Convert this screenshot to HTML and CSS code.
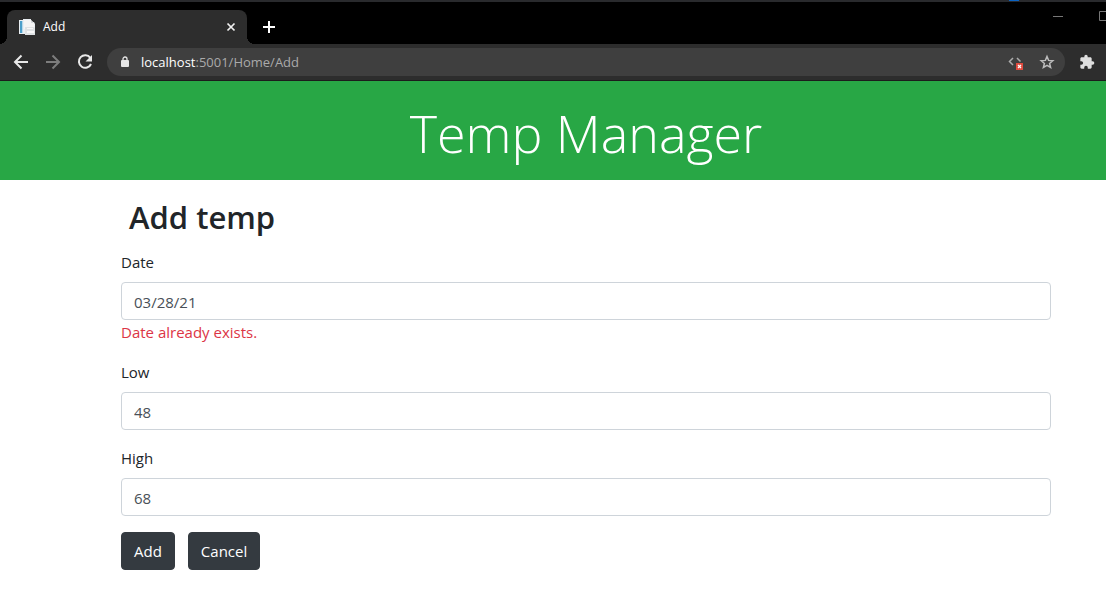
FILE: index.html
```
<!DOCTYPE html>
<html lang="en">
<head>
<meta charset="utf-8">
<meta name="viewport" content="width=device-width, initial-scale=1">
<title>Add</title>
<link rel="stylesheet" href="styles.css">
</head>
<body>
<div class="browser">
  <div class="tabstrip">
    <div class="tab">
      <svg class="favicon" width="16" height="16" viewBox="0 0 16 16" aria-hidden="true">
        <path fill="#e9eef2" d="M0 1h4V0h8v3h3l1 2v11H6v-1H0z"/>
        <path fill="#4c9fca" d="M1 2h3v12H1z"/>
        <path fill="#b9d9ea" d="M3 2h1v12H3z"/>
        <path fill="#f5f5f5" d="M5 1h7l3 3v6H5z"/>
        <path fill="#d5d9dc" d="M12 1v3h3z"/>
        <path fill="#dfe2e4" d="M6 8h9l1 1v7H6z"/>
        <path fill="#f8f8f8" d="M8 9h6v1H8zM8 12h7v2H8z"/>
      </svg>
      <span class="tab-title">Add</span>
      <button class="icon-button" type="button" aria-label="Close tab">
        <svg width="10" height="10" viewBox="0 0 10 10"><path d="M1.500 1.500l7 7M8.500 1.500l-7 7" stroke="#f1f1f1" stroke-width="1.700"/></svg>
      </button>
    </div>
    <button class="icon-button new-tab" type="button" aria-label="New tab">
      <svg width="12" height="12" viewBox="0 0 12 12"><path d="M6 0v12M0 6h12" stroke="#fff" stroke-width="2"/></svg>
    </button>
    <div class="window-controls">
      <button class="icon-button" type="button" aria-label="Minimize">
        <svg width="10" height="10" viewBox="0 0 10 10"><path d="M0 5.500h10" stroke="#777"/></svg>
      </button>
      <button class="icon-button" type="button" aria-label="Maximize">
        <svg width="10" height="10" viewBox="0 0 10 10"><path d="M.5.5h9v9h-9z" fill="none" stroke="#777"/></svg>
      </button>
    </div>
  </div>
  <div class="toolbar">
    <button class="icon-button" type="button" aria-label="Back">
      <svg width="16" height="16" viewBox="0 0 16 16" fill="none" stroke="#e8e8e8" stroke-width="2"><path d="M15 8H2M8.500 1.500L2 8l6.500 6.500"/></svg>
    </button>
    <button class="icon-button" type="button" aria-label="Forward">
      <svg width="16" height="16" viewBox="0 0 16 16" fill="none" stroke="#7d7d7d" stroke-width="2"><path d="M1 8h13M7.500 1.500L14 8l-6.500 6.500"/></svg>
    </button>
    <button class="icon-button" type="button" aria-label="Reload">
      <svg width="16" height="16" viewBox="0 0 16 16"><path d="M13.300 3.800A6.300 6.300 0 1 0 14 10" fill="none" stroke="#e8e8e8" stroke-width="2"/><path d="M15 1v6.500H8.500z" fill="#e8e8e8"/></svg>
    </button>
    <div class="address">
      <svg class="lock" width="8" height="12" viewBox="0 0 8 12" aria-hidden="true"><path d="M2 5V3a2 2 0 0 1 4 0v2" fill="none" stroke="#e6e6e6" stroke-width="1.300"/><rect y="4" width="8" height="7" rx="1" fill="#e6e6e6"/></svg>
      <span class="url"><span class="host">localhost</span>:5001/Home/Add</span>
      <button class="icon-button" type="button" aria-label="View blocked script">
        <svg width="16" height="16" viewBox="0 0 16 16"><path d="M6 4L2.500 7.500 6 11M10 4l3.500 3.500" fill="none" stroke="#adadad" stroke-width="1.500"/><rect x="9" y="9" width="7" height="7" fill="#df4b3f"/><path d="M11 11l3 3M14 11l-3 3" stroke="#fff" stroke-width="1.200"/></svg>
      </button>
      <button class="icon-button" type="button" aria-label="Bookmark this page">
        <svg width="16" height="16" viewBox="0 0 16 16"><path d="M8 2.500l1.600 3.900 4.200.3-3.200 2.700 1 4.100L8 11.300l-3.600 2.200 1-4.100-3.200-2.700 4.200-.3z" fill="none" stroke="#bcbcbc" stroke-width="1.500"/></svg>
      </button>
    </div>
    <button class="icon-button" type="button" aria-label="Extensions">
      <svg width="16" height="16" viewBox="0 0 24 24" fill="#dedede"><path d="M20.500 11H19V7c0-1.100-.9-2-2-2h-4V3.500a2.500 2.500 0 0 0-5 0V5H4c-1.100 0-2 .9-2 2v3.800h1.500a2.700 2.700 0 0 1 0 5.400H2V20c0 1.100.9 2 2 2h3.800v-1.500a2.700 2.700 0 0 1 5.400 0V22H17c1.100 0 2-.9 2-2v-4h1.500a2.500 2.500 0 0 0 0-5z"/></svg>
    </button>
  </div>
</div>
<header class="banner"><h1 class="banner-title">Temp Manager</h1></header>
<main class="content">
  <h2 class="heading">Add temp</h2>
  <form>
    <div class="field">
      <label class="label" for="date">Date</label>
      <input class="input" id="date" type="text" value="03/28/21" aria-describedby="date-error">
      <span class="error" id="date-error">Date already exists.</span>
    </div>
    <div class="field">
      <label class="label" for="low">Low</label>
      <input class="input" id="low" type="text" value="48">
    </div>
    <div class="field">
      <label class="label" for="high">High</label>
      <input class="input" id="high" type="text" value="68">
    </div>
    <div class="actions">
      <button class="button" type="submit">Add</button>
      <a class="button" href="#">Cancel</a>
    </div>
  </form>
</main>
</body>
</html>
```
FILE: styles.css
```
* {
  box-sizing: border-box;
}

body {
  margin: 0;
  background: #fff;
  color: #212529;
  font: 15px/24px "Open Sans", "Noto Sans", sans-serif;
}

svg {
  display: block;
  flex: none;
}

.icon-button {
  display: flex;
  align-items: center;
  justify-content: center;
  flex: none;
  padding: 0;
  border: 0;
  background: none;
}

/* Browser window */
.browser {
  position: relative;
  overflow: hidden;
  border-bottom: 1px solid #1c1c1c;
  background: #2d2d2d;
}

/* Sliver of the window behind */
.browser::before {
  content: "";
  position: absolute;
  top: 0;
  right: 87px;
  width: 10px;
  height: 1px;
  background: #0a63c2;
}

.tabstrip {
  display: flex;
  height: 44px;
  padding: 8px 0 0 7px;
  border-top: 2px solid #292a2d;
  background: #000;
}

.tab {
  position: relative;
  display: flex;
  align-items: center;
  gap: 8px;
  width: 240px;
  padding: 0 11px 0 12px;
  border-radius: 8px 8px 0 0;
  background: #2d2d2d;
  color: #fff;
  font-size: 12px;
}

.tab::before,
.tab::after {
  content: "";
  position: absolute;
  bottom: 0;
  width: 8px;
  height: 8px;
}

.tab::before {
  right: 100%;
  background: radial-gradient(circle at 0 0, #000 8px, #2d2d2d 8px);
}

.tab::after {
  left: 100%;
  background: radial-gradient(circle at 100% 0, #000 8px, #2d2d2d 8px);
}

.tab-title {
  flex: 1;
}

.new-tab {
  margin-left: 16px;
}

.window-controls {
  display: flex;
  align-items: flex-start;
  gap: 36px;
  margin: 1px -3px 0 auto;
}

.toolbar {
  display: flex;
  align-items: center;
  gap: 16px;
  height: 36px;
  padding: 0 11px 0 13px;
}

.address {
  display: flex;
  align-items: center;
  flex: 1;
  gap: 16px;
  height: 28px;
  margin: 0 -2px;
  padding: 0 10px 0 14px;
  border-radius: 14px;
  background: #3f3f3f;
  color: #aaa;
  font-size: 13px;
}

.lock {
  margin-right: -4px;
}

.url {
  flex: 1;
}

.host {
  color: #fff;
}

/* Page */
.banner {
  padding: 18px 0 14px 66px;
  background: #28a745;
  color: #fff;
  text-align: center;
}

.banner-title {
  margin: 0;
  font-size: 52px;
  font-weight: 300;
  line-height: 67px;
}

.content {
  padding: 18px 55px 40px 121px;
}

.heading {
  margin: 0 8px 14px;
  font-size: 31px;
  font-weight: 600;
  line-height: 38px;
}

.field {
  margin-bottom: 16px;
}

.label {
  display: block;
  margin-bottom: 8px;
}

.input {
  display: block;
  width: 100%;
  height: 38px;
  padding: 7px 12px 5px;
  border: 1px solid #ced4da;
  border-radius: 4px;
  background: #fff;
  color: #495057;
  font: inherit;
}

.error {
  display: block;
  color: #dc3545;
}

.actions {
  display: flex;
  gap: 13px;
}

.button {
  padding: 6px 12px;
  border: 1px solid #343a40;
  border-radius: 4px;
  background: #343a40;
  color: #fff;
  font: inherit;
  text-decoration: none;
}
```
